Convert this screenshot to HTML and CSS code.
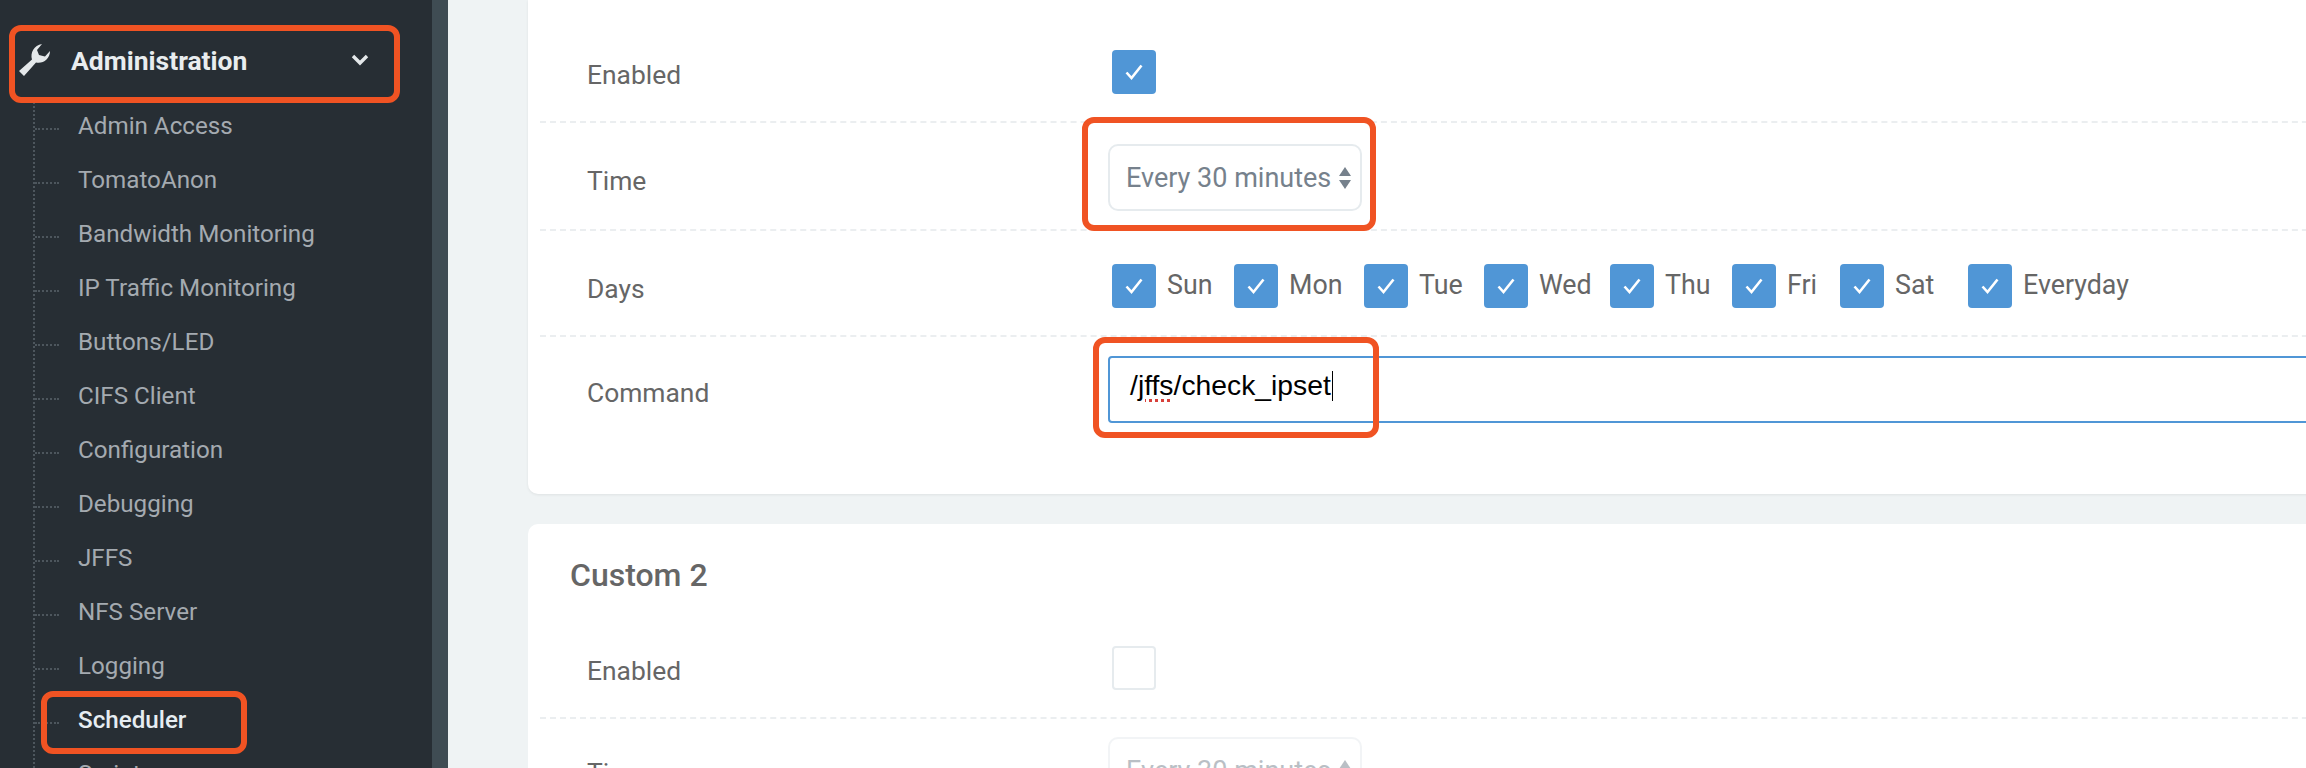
FILE: index.html
```html
<!DOCTYPE html>
<html>
  <head>
  <meta charset="utf-8">
  <title>Scheduler</title>
  <link rel="stylesheet" href="styles.css">
  </head>
  <body>
    <svg class="defs" width="0" height="0">
      <symbol id="tick" viewBox="0 0 18 16"><path d="M1.5 8.5 L6.5 14 L16.5 1.5" fill="none" stroke="#fff" stroke-width="2.6"/></symbol>
    </svg>

    <div class="sidebar">
      <div class="nav_head">
        <svg class="wrench" viewBox="0 0 32 32"><path d="M1 27 L14 15.5 C12 9 16 1 24 0 L19 6 L21 11 L27 12.5 L32 7 C32 15 25 20 18 18.5 L6 32 Z" fill="#e4e8ea"/></svg>
        <span class="nav_title">Administration</span>
        <svg class="chevron" viewBox="0 0 18 12"><path d="M2 2 L9 9 L16 2" fill="none" stroke="#e4e8ea" stroke-width="3.4"/></svg>
      </div>
      <ul class="nav_list">
        <li>Admin Access</li>
        <li>TomatoAnon</li>
        <li>Bandwidth Monitoring</li>
        <li>IP Traffic Monitoring</li>
        <li>Buttons/LED</li>
        <li>CIFS Client</li>
        <li>Configuration</li>
        <li>Debugging</li>
        <li>JFFS</li>
        <li>NFS Server</li>
        <li>Logging</li>
        <li class="current">Scheduler</li>
        <li>Scripts</li>
      </ul>
    </div>

    <div class="main">
      <div class="card first">
        <div class="row row_enabled">
          <div class="label">Enabled</div>
          <div class="control"><span class="check on"><svg><use href="#tick"/></svg></span></div>
        </div>
        <div class="row row_time">
          <div class="label">Time</div>
          <div class="control">
            <div class="select">Every 30 minutes<span class="arrows"><i class="up"></i><i class="down"></i></span></div>
          </div>
        </div>
        <div class="row row_days">
          <div class="label">Days</div>
          <div class="control days">
            <span class="day d_sun"><span class="check on"><svg><use href="#tick"/></svg></span>Sun</span>
            <span class="day d_mon"><span class="check on"><svg><use href="#tick"/></svg></span>Mon</span>
            <span class="day d_tue"><span class="check on"><svg><use href="#tick"/></svg></span>Tue</span>
            <span class="day d_wed"><span class="check on"><svg><use href="#tick"/></svg></span>Wed</span>
            <span class="day d_thu"><span class="check on"><svg><use href="#tick"/></svg></span>Thu</span>
            <span class="day d_fri"><span class="check on"><svg><use href="#tick"/></svg></span>Fri</span>
            <span class="day d_sat"><span class="check on"><svg><use href="#tick"/></svg></span>Sat</span>
            <span class="day"><span class="check on"><svg><use href="#tick"/></svg></span>Everyday</span>
          </div>
        </div>
        <div class="row row_command">
          <div class="label">Command</div>
          <div class="control">
            <div class="command">/<span class="typo">jffs</span>/check_ipset<span class="caret"></span></div>
          </div>
        </div>
      </div>

      <div class="card second">
        <h2 class="card_title">Custom 2</h2>
        <div class="row row_enabled2">
          <div class="label">Enabled</div>
          <div class="control"><span class="check"></span></div>
        </div>
        <div class="row row_time2">
          <div class="label">Time</div>
          <div class="control">
            <div class="select off">Every 30 minutes<span class="arrows"><i class="up"></i><i class="down"></i></span></div>
          </div>
        </div>
      </div>
    </div>

    <div class="mark mark_head"></div>
    <div class="mark mark_sched"></div>
    <div class="mark mark_time"></div>
    <div class="mark mark_cmd"></div>
  </body>
</html>
```

FILE: styles.css
```css
html, body { height: 768px; overflow: hidden; }
body {
  margin: 0;
  display: flex;
  position: relative;
  background-color: #eff3f4;
  font-family: Roboto, "Liberation Sans", sans-serif;
  color: #666;
}
.defs { position: absolute; }

/* sidebar */
.sidebar {
  width: 432px;
  height: 746px;
  flex: none;
  padding-top: 22px;
  background-color: #272e34;
  border-right: 16px solid #3f4c53;
  overflow: hidden;
}
.nav_head {
  height: 76px;
  display: flex;
  align-items: center;
  padding-left: 18px;
  color: #e9edef;
}
.wrench { width: 32px; height: 32px; flex: none; }
.nav_title {
  width: 280px;
  margin-left: 21px;
  padding-top: 1px;
  font-size: 26.5px;
  font-weight: 700;
}
.chevron { width: 18px; height: 12px; flex: none; }
.nav_list {
  list-style: none;
  margin: 12px 0 0 33px;
  padding: 0;
  border-left: 2px dotted #4d565d;
}
.nav_list li {
  height: 54px;
  padding-top: 1px;
  box-sizing: border-box;
  display: flex;
  align-items: center;
  font-size: 24.2px;
  color: #a4aab0;
}
.nav_list li:first-child { margin-top: -12px; }
.nav_list li::before {
  content: "";
  width: 24px;
  margin: 6px 19px 0 0;
  border-top: 2px dotted #4d565d;
}
.nav_list .current { color: #e6edf2; font-weight: 500; }

/* main column */
.main {
  flex: none;
  width: 1858px;
  padding-left: 80px;
  box-sizing: border-box;
  overflow: hidden;
}
.card {
  width: 1900px;
  padding-left: 12px;
  box-sizing: border-box;
  background-color: #fff;
  border-radius: 10px;
}
.card.first {
  height: 494px;
  border-radius: 0 0 10px 10px;
  box-shadow: 0 1px 3px rgba(0, 0, 0, 0.07);
}
.card.second { margin-top: 30px; height: 300px; }
.card_title {
  margin: 0;
  padding: 30px 0 0 30px;
  height: 72px;
  font-size: 32px;
  line-height: 42px;
  font-weight: 500;
  color: #666;
}
.row {
  display: flex;
  align-items: center;
  border-bottom: 2px dashed #ebeef0;
}
.row_enabled { padding: 50px 0 27px; }
.row_time { padding: 21px 0 18px; }
.row_days { padding: 31px 0 27px; }
.row_command { padding: 19px 0 0; border-bottom: none; }
.row_enabled2 { padding: 20px 0 27px; }
.row_time2 { padding: 18px 0 0; border-bottom: none; }

.label {
  width: 521px;
  margin-left: 47px;
  padding-top: 5px;
  flex: none;
  font-size: 26.4px;
}
.row_time .label, .row_days .label, .row_command .label { padding-top: 7px; }
.control { flex: none; }
.check {
  width: 44px;
  height: 44px;
  margin-left: 4px;
  display: inline-flex;
  align-items: center;
  justify-content: center;
  box-sizing: border-box;
  vertical-align: top;
  border: 2px solid #e6ebee;
  border-radius: 4px;
  background-color: #fff;
}
.check.on { background-color: #5096d6; border: none; }
.check svg { width: 18px; height: 16px; }

.select {
  width: 254px;
  height: 67px;
  padding-left: 16px;
  display: flex;
  align-items: center;
  box-sizing: border-box;
  border: 2px solid #e6ebee;
  border-radius: 10px;
  font-size: 27px;
  color: #76818c;
}
.select.off { opacity: 0.5; }
.arrows {
  margin-left: 8px;
  display: flex;
  flex-direction: column;
  gap: 4px;
}
.arrows i {
  width: 0;
  height: 0;
  border-left: 6px solid transparent;
  border-right: 6px solid transparent;
}
.arrows .up { border-bottom: 9px solid #76818c; }
.arrows .down { border-top: 9px solid #76818c; }

.days { display: flex; }
.day {
  display: flex;
  align-items: center;
  font-size: 26.8px;
}
.day .check { margin: 2px 11px 0 4px; }
.d_sun { width: 122px; }
.d_mon { width: 130px; }
.d_tue { width: 120px; }
.d_wed { width: 126px; }
.d_thu { width: 122px; }
.d_fri { width: 108px; }
.d_sat { width: 128px; }

.command {
  width: 1400px;
  height: 67px;
  padding: 0 0 8px 20px;
  display: flex;
  align-items: center;
  box-sizing: border-box;
  border: 2px solid #5096d6;
  border-radius: 4px;
  font-family: "Liberation Sans", Arial, sans-serif;
  font-size: 28.3px;
  color: #000;
  white-space: pre;
}
.typo {
  text-decoration: underline dotted #d8403a 3px;
  text-underline-offset: 4px;
}
.caret {
  width: 1px;
  height: 30px;
  margin-left: 1px;
  background-color: #000;
}

/* orange annotation boxes drawn over the page */
.mark {
  position: absolute;
  box-sizing: border-box;
  border: 6px solid #f05323;
  border-radius: 12px;
}
.mark_head { left: 9px; top: 25px; width: 391px; height: 78px; }
.mark_sched { left: 41px; top: 691px; width: 206px; height: 63px; }
.mark_time { left: 1082px; top: 117px; width: 294px; height: 114px; }
.mark_cmd { left: 1093px; top: 337px; width: 286px; height: 101px; }
```
